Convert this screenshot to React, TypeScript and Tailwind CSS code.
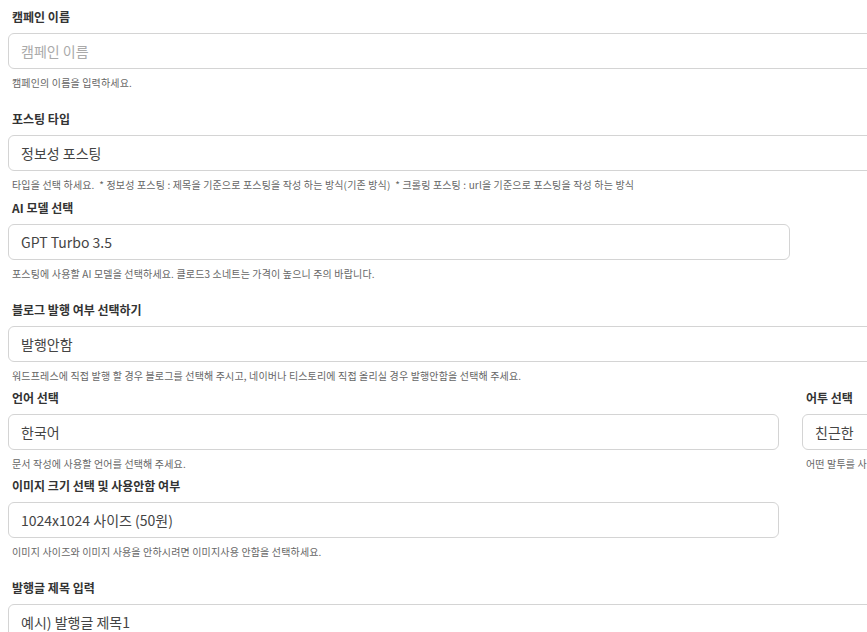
const font = { fontFamily: '"Noto Sans CJK KR", "Noto Sans", sans-serif' }

type FieldProps = {
  label: string
  value?: string
  placeholder?: string
  help: string
  width?: string
  className?: string
}

const Field = ({ label, value, placeholder, help, width = "w-full", className = "" }: FieldProps) => {
  return (
    <div className={className}>
      <label className="block pl-1 text-[12px] leading-[14px] font-bold text-[#333] mb-[9px]">{label}</label>
      <div
        className={`${width} h-[36px] flex items-center px-3 rounded-[6px] border border-[#d4d4d4] bg-white text-[14px] ${
          value ? "text-[#444]" : "text-[#aaa]"
        }`}
      >
        {value ?? placeholder}
      </div>
      <p className="pl-1 mt-1.5 text-[10px] leading-[16px] tracking-[0.15px] text-[#666] whitespace-pre">{help}</p>
    </div>
  )
}

export default function App() {
  return (
    <div className="w-full h-[632px] overflow-hidden bg-white" style={font}>
      <div className="w-[1200px] pl-2 pt-[10px]">
        <Field label="캠페인 이름" placeholder="캠페인 이름" help="캠페인의 이름을 입력하세요." />
        <Field
          className="mt-[21px]"
          label="포스팅 타입"
          value="정보성 포스팅"
          help="타입을 선택 하세요.  * 정보성 포스팅 : 제목을 기준으로 포스팅을 작성 하는 방식(기존 방식)  * 크롤링 포스팅 : url을 기준으로 포스팅을 작성 하는 방식"
        />
        <Field
          className="mt-[8px]"
          label="AI 모델 선택"
          value="GPT Turbo 3.5"
          width="w-[782px]"
          help="포스팅에 사용할 AI 모델을 선택하세요. 클로드3 소네트는 가격이 높으니 주의 바랍니다."
        />
        <Field
          className="mt-[21px]"
          label="블로그 발행 여부 선택하기"
          value="발행안함"
          help="워드프레스에 직접 발행 할 경우 블로그를 선택해 주시고, 네이버나 티스토리에 직접 올리실 경우 발행안함을 선택해 주세요."
        />
        <div className="mt-[7px] flex gap-[23px]">
          <div className="w-[771px] shrink-0">
            <Field label="언어 선택" value="한국어" help="문서 작성에 사용할 언어를 선택해 주세요." />
            <Field
              className="mt-[7px]"
              label="이미지 크기 선택 및 사용안함 여부"
              value="1024x1024 사이즈 (50원)"
              help="이미지 사이즈와 이미지 사용을 안하시려면 이미지사용 안함을 선택하세요."
            />
          </div>
          <div className="w-[300px] shrink-0">
            <Field label="어투 선택" value="친근한" help="어떤 말투를 사용할지 선택해 주세요." />
          </div>
        </div>
        <Field className="mt-[21px]" label="발행글 제목 입력" value="예시) 발행글 제목1" help="" />
      </div>
    </div>
  )
}
